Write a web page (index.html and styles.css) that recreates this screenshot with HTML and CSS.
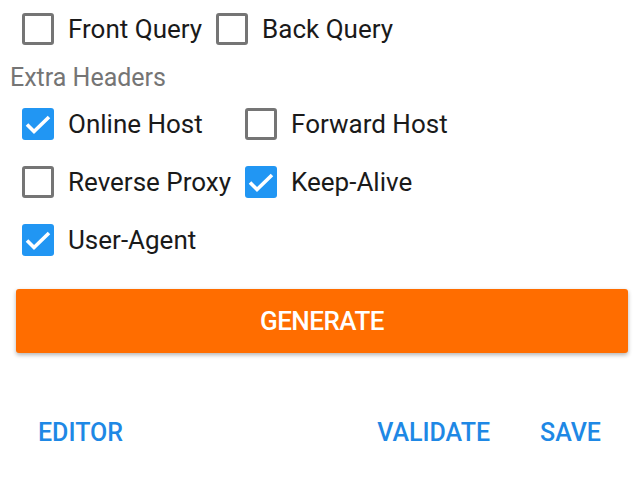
FILE: index.html
```html
<!DOCTYPE html>
<html lang="en">
<head>
    <meta charset="UTF-8">
    <meta name="viewport" content="width=device-width, initial-scale=1.0">
    <title>Payload Generator</title>
    <link rel="stylesheet" href="styles.css">
</head>
<body>
    <div class="panel">
        <div class="query-row">
            <label class="check">
                <span class="box"></span>
                <span class="check-text">Front Query</span>
            </label>
            <label class="check">
                <span class="box"></span>
                <span class="check-text">Back Query</span>
            </label>
        </div>

        <div class="section-title">Extra Headers</div>

        <div class="header-grid">
            <label class="check">
                <span class="box checked">
                    <svg viewBox="0 0 32 32"><path d="M5 16.5l7 7L27 9"/></svg>
                </span>
                <span class="check-text">Online Host</span>
            </label>
            <label class="check">
                <span class="box"></span>
                <span class="check-text">Forward Host</span>
            </label>
            <label class="check">
                <span class="box"></span>
                <span class="check-text">Reverse Proxy</span>
            </label>
            <label class="check">
                <span class="box checked">
                    <svg viewBox="0 0 32 32"><path d="M5 16.5l7 7L27 9"/></svg>
                </span>
                <span class="check-text">Keep-Alive</span>
            </label>
            <label class="check">
                <span class="box checked">
                    <svg viewBox="0 0 32 32"><path d="M5 16.5l7 7L27 9"/></svg>
                </span>
                <span class="check-text">User-Agent</span>
            </label>
        </div>

        <button class="generate">GENERATE</button>

        <div class="actions">
            <button class="flat">EDITOR</button>
            <div class="actions-right">
                <button class="flat">VALIDATE</button>
                <button class="flat">SAVE</button>
            </div>
        </div>
    </div>
</body>
</html>
```

FILE: styles.css
```css
body {
    margin: 0;
    background-color: #ffffff;
    font-family: Roboto, 'Noto Sans', Arial, sans-serif;
    color: #212121;
}
.panel {
    padding: 0 12px 0 0;
}
.query-row {
    display: flex;
    gap: 14px;
    padding-left: 22px;
}
.check {
    display: flex;
    align-items: center;
    gap: 14px;
    height: 58px;
}
.box {
    box-sizing: border-box;
    width: 32px;
    height: 32px;
    border: 3px solid #757575;
    border-radius: 3px;
    flex-shrink: 0;
}
.box.checked {
    border: none;
    background-color: #2196f3;
}
.box svg {
    display: block;
    width: 32px;
    height: 32px;
}
.box svg path {
    fill: none;
    stroke: #ffffff;
    stroke-width: 3.6;
}
.check-text {
    font-size: 26px;
    color: #1a1a1a;
}
.section-title {
    padding-left: 10px;
    font-size: 25px;
    color: #757575;
    height: 36px;
    line-height: 40px;
}
.header-grid {
    display: grid;
    grid-template-columns: auto auto;
    justify-content: start;
    column-gap: 14px;
    padding-left: 22px;
    margin-top: 1px;
}
.generate {
    display: block;
    width: 612px;
    height: 64px;
    margin: 20px 0 0 16px;
    border: none;
    border-radius: 3px;
    background-color: #ff6d00;
    color: #ffffff;
    font-family: Roboto, Arial, sans-serif;
    font-size: 26px;
    font-weight: 500;
    letter-spacing: -0.5px;
    box-shadow: 0 2px 4px rgba(0,0,0,0.3);
}
.actions {
    display: flex;
    justify-content: space-between;
    align-items: center;
    margin-top: 59px;
    padding: 0 27px 0 38px;
}
.actions-right {
    display: flex;
    gap: 50px;
}
.flat {
    border: none;
    background: none;
    padding: 0;
    color: #1e88e5;
    font-family: Roboto, Arial, sans-serif;
    font-size: 25px;
    font-weight: 500;
    height: 40px;
}
```
